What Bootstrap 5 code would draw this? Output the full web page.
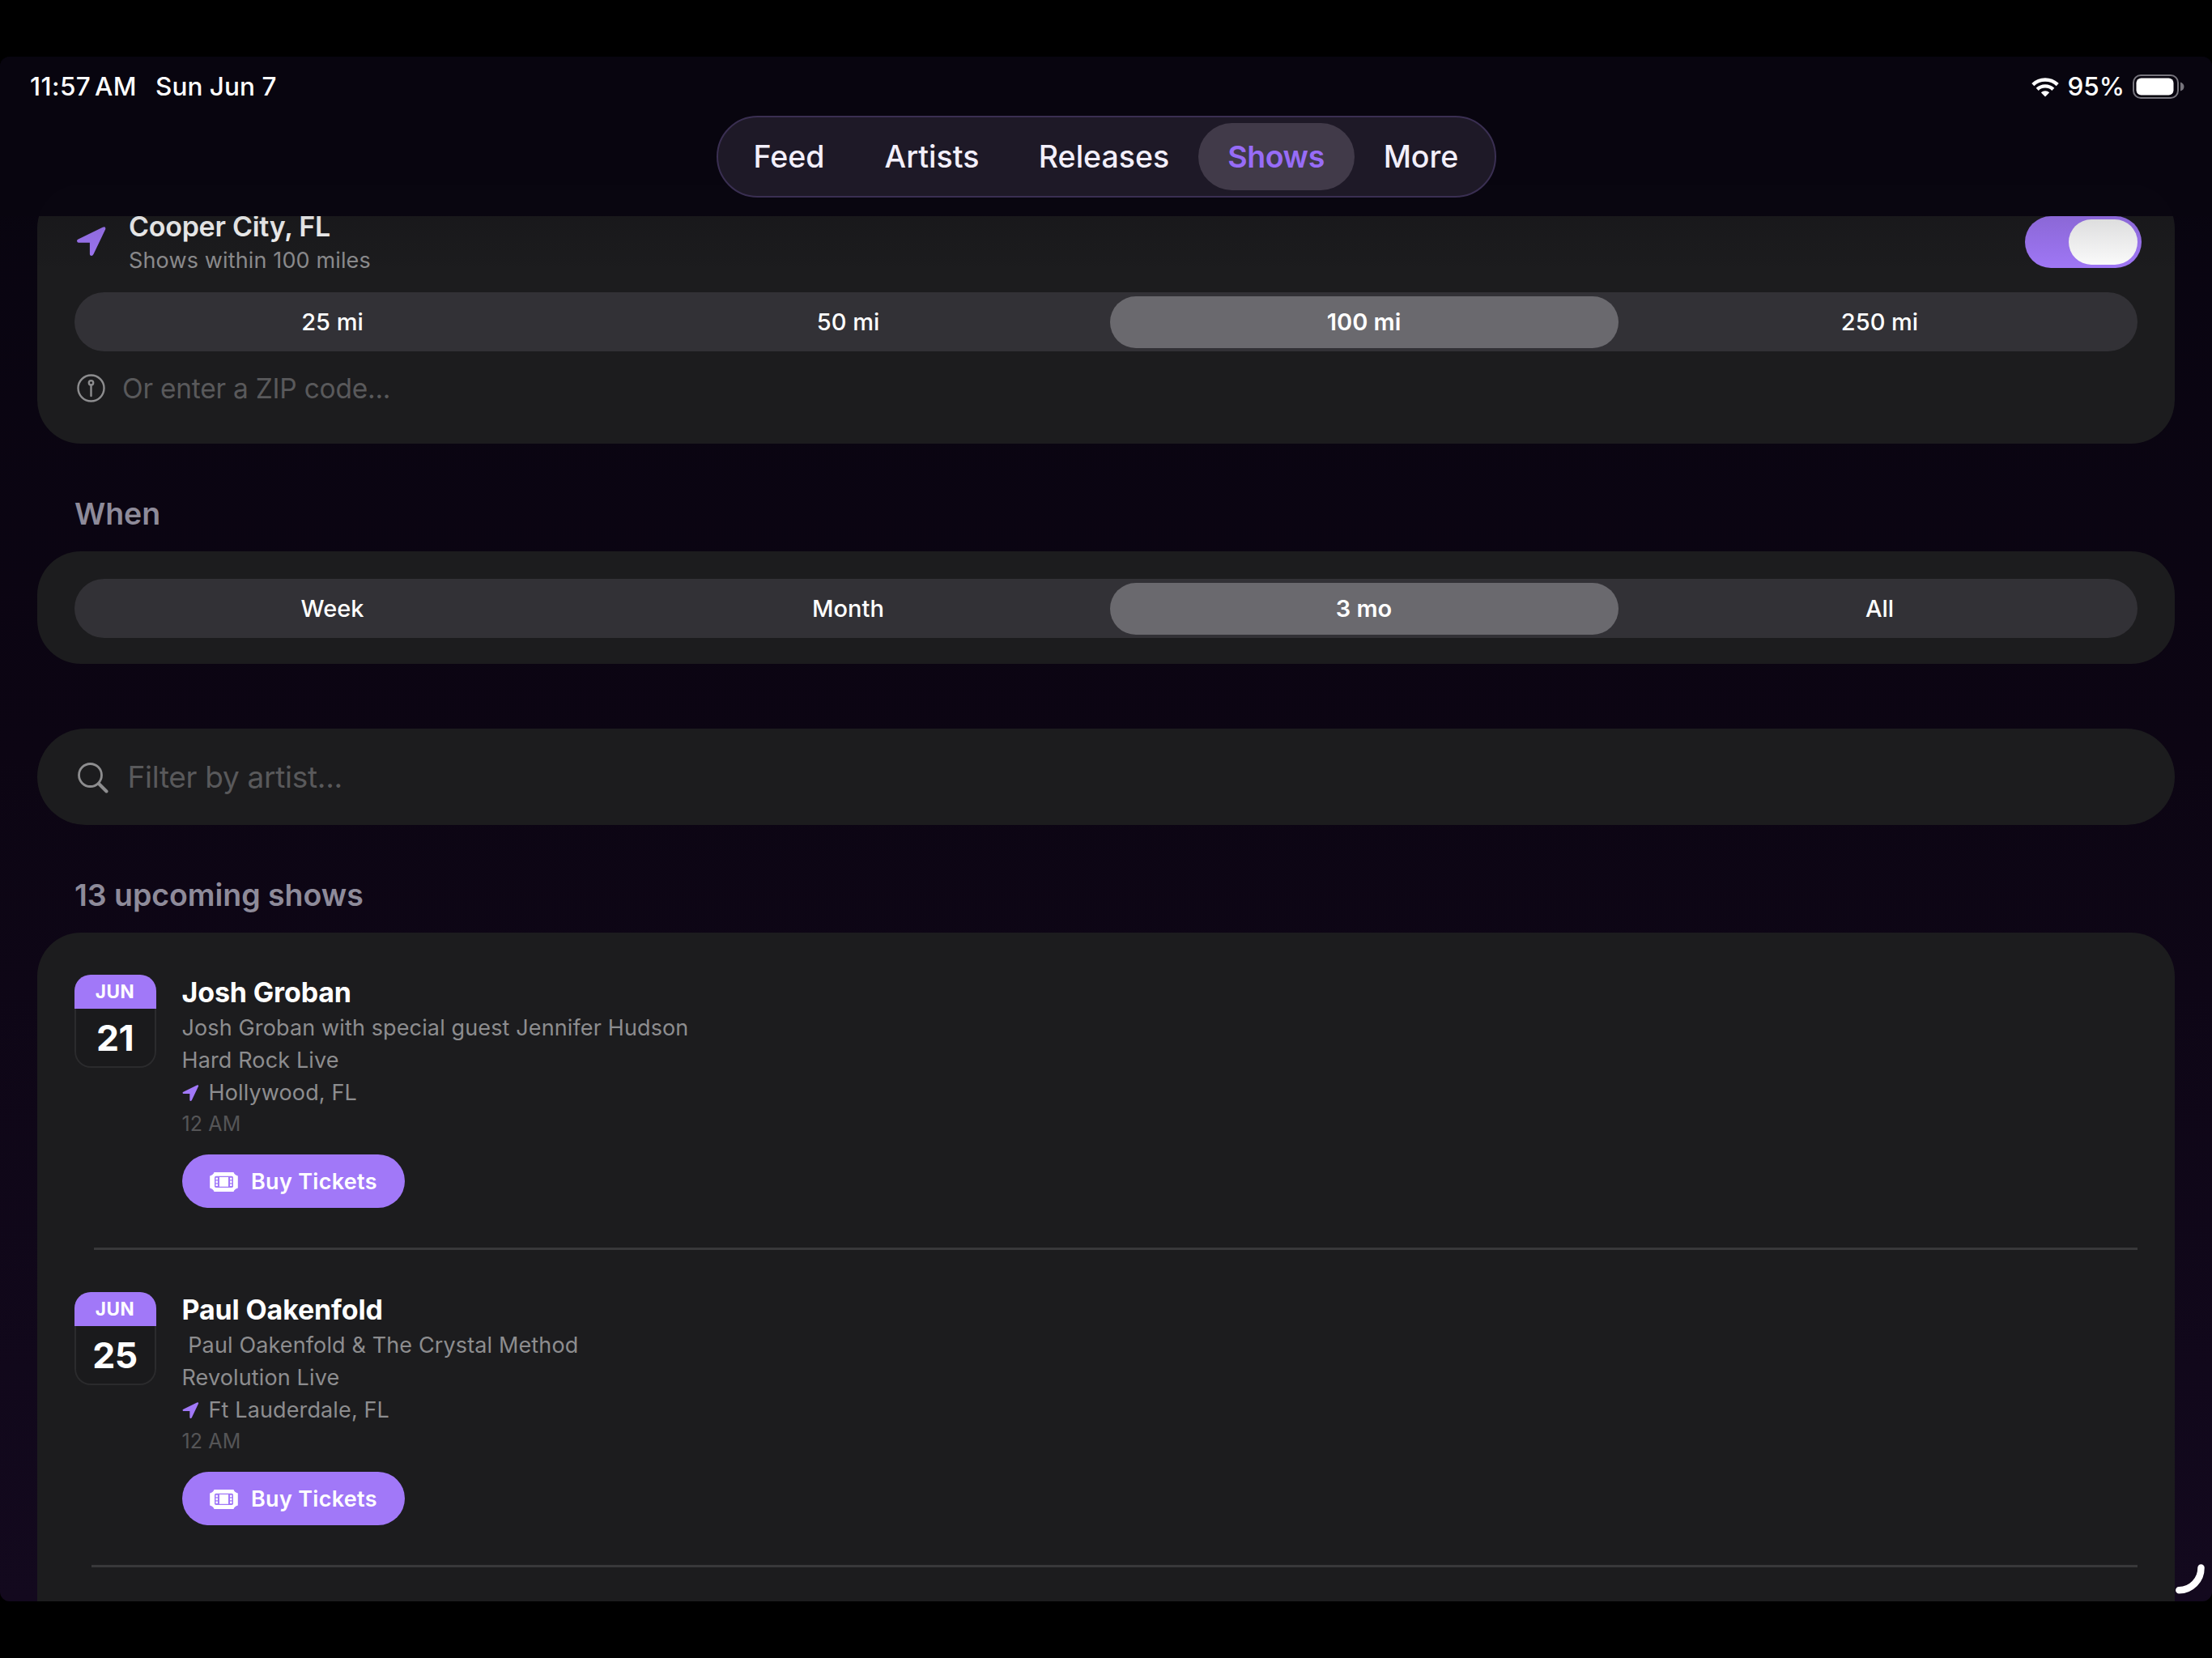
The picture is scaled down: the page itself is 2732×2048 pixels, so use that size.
<!DOCTYPE html>
<html lang="en">
<head>
<meta charset="utf-8">
<title>Shows</title>
<link href="https://cdn.jsdelivr.net/npm/bootstrap@5.3.0/dist/css/bootstrap.min.css" rel="stylesheet">
<script src="https://cdn.jsdelivr.net/npm/bootstrap@5.3.0/dist/js/bootstrap.bundle.min.js"></script>
<style>
body{background:#000;color:#fff;font-family:Inter,"Liberation Sans",sans-serif;padding:70px 0;height:2048px;overflow:hidden}
svg{display:block;flex:none}
.screen{height:1908px;border-radius:12px;background:linear-gradient(#080510,#0c0513 45%,#13091e)}

/* status bar and tab pill */
.topbar{height:197px;z-index:2;background:rgba(8,5,16,.95)}
.topbar::after{content:"";position:absolute;left:0;right:0;top:100%;height:70px;background:linear-gradient(rgba(5,3,10,.14),rgba(5,3,10,0))}
.status{height:74px;margin-bottom:-1px;padding:0 34px 0 37px;font-size:31.5px;font-weight:500}
.clock{letter-spacing:.4px;word-spacing:-4px;width:155px}
.today{letter-spacing:.05px}
.battery-pct{margin:0 10px;letter-spacing:0}
.tabs{width:963px;height:101px;border-radius:51px;background:#1e1927;border:2px solid #3a2f52;padding:0 8px;font-size:37.5px;font-weight:500}
.tabs .nav-link{height:83px;line-height:83px;padding:0;border-radius:42px;color:#f3effb;text-align:center}
.tabs .nav-link.active{background:#413a49;color:#976cf7;font-weight:600;letter-spacing:-.4px}
.tab-a{width:160px}.tab-b{width:193px}.tab-c{width:232px}.tab-d{width:193px}.tab-e{width:165px}

/* grouped panels */
.panel{background:#1c1c1e;margin:0 46px;border-radius:54px;padding:0 46px}
.panel-place{margin-top:-39px;height:320px;padding-top:31px}
.panel-when{margin-top:22.5px;height:139.5px;padding-top:34.5px}
.panel-filter{margin-top:80px;height:119px;border-radius:60px;font-size:37px;letter-spacing:-.3px}
.panel-list{margin-top:23px;height:1000px}
.seg{height:73px;border-radius:37px;background:#323136;font-size:29px;font-weight:500}
.seg div{flex:1 1 0;margin:0 4.5px;height:64px;line-height:63px;border-radius:32px;text-align:center}
.seg .on{background:#6a696e;font-weight:600}
.head{font-size:37.5px;font-weight:600;line-height:49px;letter-spacing:-.05px;color:#8e8b9a;margin:0 92px -1px;padding-top:62px}
.hint{color:#59595b}
.dim{color:#8d8d8f}
.place-row{height:84px}
.place-arrow{margin:21px 28.5px 0 2.500px}
.place-name{font-size:34px;font-weight:600;line-height:41px;letter-spacing:-.27px}
.place-sub{font-size:27px;line-height:43px;letter-spacing:.14px}
.place-seg{margin-top:18px}
.zip-row{height:47px;margin-top:22px;font-size:33.5px;letter-spacing:-.24px}
.zip-row span{padding-top:2px}
.pin-icon{margin:0 21.5px 0 2.500px}
.glass-icon{margin:2px 23.5px 0 4px}
.switch{width:144px;height:64px;border-radius:32px;background:#a178f8;padding:4px 5px;margin:8px -5px 0 0}
.switch i{width:85px;height:56px;border-radius:28px;background:#fff}

/* list of shows */
.show-row{padding:52px 0 49px}
.cal{width:101px;height:115px;border-radius:20px;background:#1a1a1c;box-shadow:inset 0 0 0 2px #2b2b2d;overflow:hidden;margin-left:-.5px}
.cal b{display:block;text-align:center}
.cal .mon{height:42px;line-height:42px;background:#a178f8;font-size:22.5px;letter-spacing:.5px}
.cal .day{font-size:44.5px;line-height:73px;letter-spacing:-.5px}
.info{margin-left:32px;font-size:27px;line-height:40px;letter-spacing:.13px;color:#8d8d8f}
.nm{font-size:34px;font-weight:700;line-height:43px;margin-bottom:3px;letter-spacing:-.15px;color:#fff}
.tm{font-size:25px;line-height:37px;color:#555557}
.town svg{margin-right:12px}
.buy{width:275px;height:66px;border-radius:33px;background:#a178f8;color:#fff;margin-top:19px;padding:1px 0 0 34.5px;font-size:27px;line-height:40px;font-weight:600;letter-spacing:.3px;border:0}
.buy svg{margin-right:16px}
.rule{height:3px;background:#38383a;margin-left:24px}
.rule-b{margin-left:21px}
.spin{right:9px;bottom:9px}
</style>
</head>
<body>
<svg width="0" height="0" class="position-absolute">
  <symbol id="arrow" viewBox="0 0 36 36"><path d="M31.8.8Q36-.8 35.2 3.2L20.500 34Q19 36.800 16.600 35.600 15.900 35 15.900 33.800V19.700H2Q.4 19.700.1 18-.2 16.400 1.600 15.600Z"/></symbol>
  <symbol id="ticket" viewBox="0 0 35 24">
    <path fill="#fff" d="M5.500 0h24q1 3.200 5.300 4.500v15q-4.300 1.300-5.300 4.500h-24Q4.500 20.800.2 19.500v-15Q4.500 3.200 5.500 0z"/>
    <rect x="6" y="4.800" width="23" height="14.200" rx="1.800" fill="#a178f8"/>
    <path fill="#fff" d="M12 6h11v11.800H12zM7.500 6.700h2.400v2.600H7.500zM7.500 10.600h2.400v2.600H7.500zM7.500 14.500h2.400v2.600H7.500zM25.100 6.700h2.400v2.600h-2.400zM25.100 10.600h2.400v2.600h-2.400zM25.100 14.500h2.400v2.600h-2.400z"/>
  </symbol>
</svg>
<div class="screen position-relative overflow-hidden">
  <header class="topbar position-relative">
    <div class="status d-flex align-items-center">
      <span class="clock text-nowrap">11:57 AM</span><span class="today">Sun Jun 7</span>
      <svg class="ms-auto" width="34" height="25" viewBox="0 0 34 25" fill="none" stroke="#fff" stroke-width="4.4"><path d="M1.800 9.600a22 22 0 0 1 30.400 0M7.200 15.300a14.200 14.200 0 0 1 19.600 0"/><path d="M17 24.500l-5.200-5.200a7.600 7.600 0 0 1 10.400 0z" fill="#fff" stroke="none"/></svg>
      <span class="battery-pct">95%</span>
      <svg width="64" height="30" viewBox="0 0 64 30"><rect x="1" y="1" width="55" height="28" rx="9" fill="none" stroke="#77757d" stroke-width="2"/><rect x="4.500" y="4.500" width="46" height="21" rx="6" fill="#fff"/><path d="M59 9.500q4.500 1.500 4.500 5.500t-4.500 5.500z" fill="#77757d"/></svg>
    </div>
    <nav class="tabs nav d-flex flex-nowrap align-items-center mx-auto">
      <a class="nav-link tab-a">Feed</a>
      <a class="nav-link tab-b">Artists</a>
      <a class="nav-link tab-c">Releases</a>
      <a class="nav-link tab-d active">Shows</a>
      <a class="nav-link tab-e">More</a>
    </nav>
  </header>

  <section class="panel panel-place">
    <div class="place-row d-flex align-items-start">
      <svg class="place-arrow" width="36" height="36" fill="#a178f8"><use href="#arrow"/></svg>
      <div class="flex-grow-1">
        <div class="place-name">Cooper City, FL</div>
        <div class="place-sub dim">Shows within 100 miles</div>
      </div>
      <div class="switch d-flex justify-content-end"><i></i></div>
    </div>
    <div class="seg place-seg d-flex align-items-center"><div>25 mi</div><div>50 mi</div><div class="on">100 mi</div><div>250 mi</div></div>
    <div class="zip-row d-flex align-items-center hint">
      <svg class="pin-icon" width="35" height="35" viewBox="0 0 35 35" fill="none" stroke="#8d8d8f"><circle cx="17.500" cy="17.500" r="16" stroke-width="2.400"/><circle cx="17.500" cy="10.800" r="2.700" stroke-width="2.400"/><path d="M17.500 14v13" stroke-width="2.400" stroke-linecap="round"/></svg>
      <span>Or enter a ZIP code...</span>
    </div>
  </section>

  <div class="head">When</div>
  <section class="panel panel-when">
    <div class="seg d-flex align-items-center"><div>Week</div><div>Month</div><div class="on">3 mo</div><div>All</div></div>
  </section>

  <section class="panel panel-filter d-flex align-items-center hint">
    <svg class="glass-icon" width="38" height="38" viewBox="0 0 38 38" fill="none" stroke="#8d8d8f"><circle cx="15.500" cy="15.500" r="14" stroke-width="2.800"/><path d="M26 26l9.500 9.500" stroke-width="4" stroke-linecap="round"/></svg>
    <span>Filter by artist...</span>
  </section>

  <div class="head">13 upcoming shows</div>
  <section class="panel panel-list">
    <article class="show-row d-flex align-items-start">
      <div class="cal"><b class="mon">JUN</b><b class="day">21</b></div>
      <div class="info">
        <div class="nm">Josh Groban</div>
        <div>Josh Groban with special guest Jennifer Hudson</div>
        <div>Hard Rock Live</div>
        <div class="town d-flex align-items-center"><svg width="21" height="20" fill="#a178f8"><use href="#arrow"/></svg>Hollywood, FL</div>
        <div class="tm">12 AM</div>
        <button class="buy d-flex align-items-center"><svg width="35" height="24"><use href="#ticket"/></svg>Buy Tickets</button>
      </div>
    </article>
    <div class="rule"></div>
    <article class="show-row d-flex align-items-start">
      <div class="cal"><b class="mon">JUN</b><b class="day">25</b></div>
      <div class="info">
        <div class="nm">Paul Oakenfold</div>
        <div>&nbsp;Paul Oakenfold &amp; The Crystal Method</div>
        <div>Revolution Live</div>
        <div class="town d-flex align-items-center"><svg width="21" height="20" fill="#a178f8"><use href="#arrow"/></svg>Ft Lauderdale, FL</div>
        <div class="tm">12 AM</div>
        <button class="buy d-flex align-items-center"><svg width="35" height="24"><use href="#ticket"/></svg>Buy Tickets</button>
      </div>
    </article>
    <div class="rule rule-b"></div>
  </section>
  <svg class="spin position-absolute" width="36" height="37" viewBox="0 0 36 37" fill="none" stroke="#fff" stroke-width="8.500" stroke-linecap="round"><path d="M31.500 4.500A27.500 27.500 0 0 1 4.300 32.300"/></svg>
</div>
</body>
</html>
